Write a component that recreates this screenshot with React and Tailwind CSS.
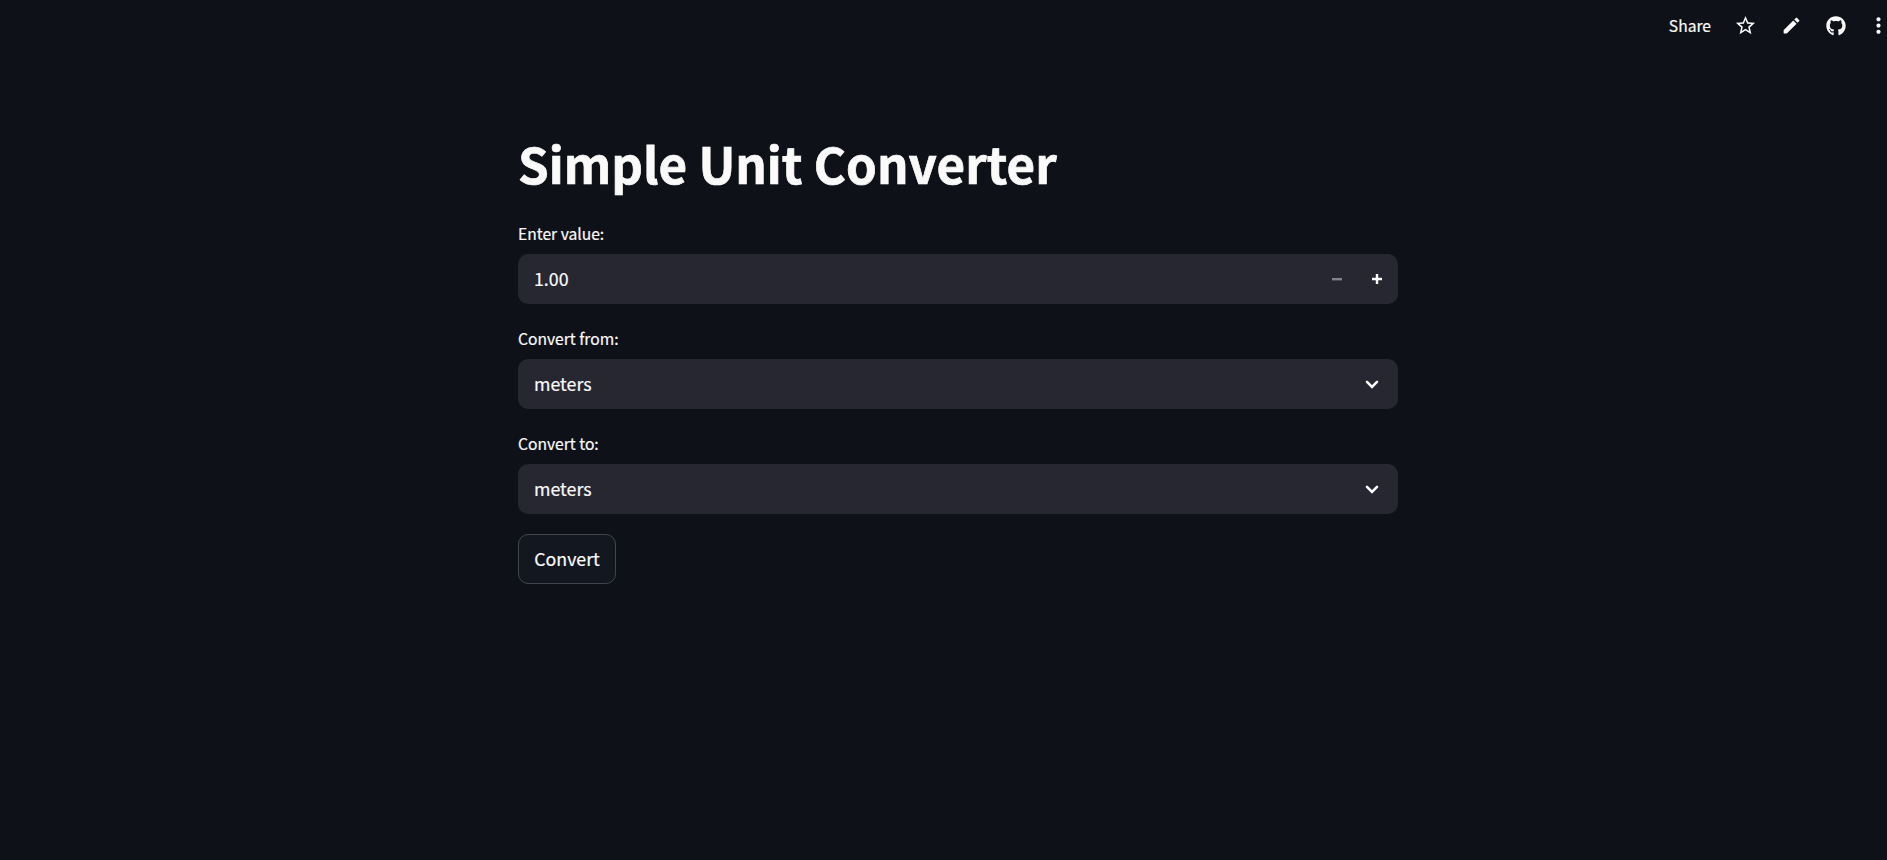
import { FaGithub } from "react-icons/fa";

const Chevron = () => (
  <svg className="h-5 w-5" viewBox="0 0 20 20" fill="none" stroke="#fafafa" strokeWidth="2.6" strokeLinecap="round" strokeLinejoin="miter">
    <path d="M5 7.8 L10 12.8 L15 7.8" />
  </svg>
);

const Label = ({ children }) => (
  <label className="block h-[30px] text-[15.65px] leading-[20px]">{children}</label>
);

const Select = ({ label, value }) => (
  <div className="mb-[25px]">
    <Label>{label}</Label>
    <div className="flex h-[50px] items-center justify-between rounded-[10px] bg-[#262730] pl-4 pr-4">
      <span className="pb-[2px] text-[17.8px] leading-[25px]">{value}</span>
      <Chevron />
    </div>
  </div>
);

export default function App() {
  return (
    <div className="h-[860px] w-full overflow-hidden bg-[#0e1117] font-['Noto_Sans_CJK_SC',sans-serif] text-[#fafafa] [-webkit-text-stroke:0.2px_#fafafa]">
      <header className="flex h-[51px] items-center justify-end">
        <span className="mr-[23px] pt-px text-[15.65px] leading-[20px]">Share</span>
        <svg className="mr-[24px] h-[23px] w-[23px]" viewBox="0 0 24 24" fill="#fafafa">
          <path d="M22 9.24l-7.19-.62L12 2 9.19 8.63 2 9.24l5.46 4.73L5.82 21 12 17.27 18.18 21l-1.63-7.03L22 9.24zM12 15.4l-3.76 2.27 1-4.28-3.32-2.88 4.38-.38L12 6.1l1.71 4.04 4.38.38-3.32 2.88 1 4.28L12 15.4z" />
        </svg>
        <svg className="mr-[24px] h-[21px] w-[21px]" viewBox="0 0 24 24" fill="#fafafa">
          <path d="M3 17.46v3.04c0 .28.22.5.5.5h3.04c.13 0 .26-.05.35-.15L17.81 9.94l-3.75-3.75L3.15 17.1c-.1.1-.15.22-.15.36zM20.71 7.04a.996.996 0 0 0 0-1.41l-2.34-2.34a.996.996 0 0 0-1.41 0l-1.83 1.83 3.75 3.75 1.83-1.83z" />
        </svg>
        <FaGithub className="mr-[20px] h-[20px] w-[20px]" />
        <svg className="-mr-[4px] h-[25px] w-[25px]" viewBox="0 0 24 24" fill="#fafafa">
          <path d="M12 8c1.1 0 2-.9 2-2s-.9-2-2-2-2 .9-2 2 .9 2 2 2zm0 2c-1.1 0-2 .9-2 2s.9 2 2 2 2-.9 2-2-.9-2-2-2zm0 6c-1.1 0-2 .9-2 2s.9 2 2 2 2-.9 2-2-.9-2-2-2z" />
        </svg>
      </header>
      <main className="ml-[518px] w-[880px] pt-[79px]">
        <h1 className="mb-[28px] h-[66px] whitespace-nowrap text-[49.3px] font-bold leading-[66px] [-webkit-text-stroke:0.7px_#fafafa]">Simple Unit Converter</h1>
        <div className="mb-[25px]">
          <Label>Enter value:</Label>
          <div className="flex h-[50px] items-center justify-between rounded-[10px] bg-[#262730] pl-4 pr-px">
            <span className="pb-[2px] text-[17.8px] leading-[25px]">1.00</span>
            <div className="flex">
              <span className="flex h-[50px] w-10 items-center justify-center">
                <svg className="h-[10px] w-[10px]" viewBox="0 0 10 10" fill="#81828a"><path d="M0 4h10v2.4H0z" /></svg>
              </span>
              <span className="flex h-[50px] w-10 items-center justify-center">
                <svg className="h-[10px] w-[10px]" viewBox="0 0 10 10" fill="#fafafa"><path d="M0 3.8h3.8V0h2.4v3.8H10v2.4H6.2V10H3.8V6.2H0z" /></svg>
              </span>
            </div>
          </div>
        </div>
        <Select label="Convert from:" value="meters" />
        <Select label="Convert to:" value="meters" />
        <button className="-mt-[5px] flex h-[50px] w-[98px] items-center justify-center rounded-[10px] border border-[#42444b] bg-[#131720] pb-[2px] text-[17.8px] leading-[25px]">Convert</button>
      </main>
    </div>
  );
}
